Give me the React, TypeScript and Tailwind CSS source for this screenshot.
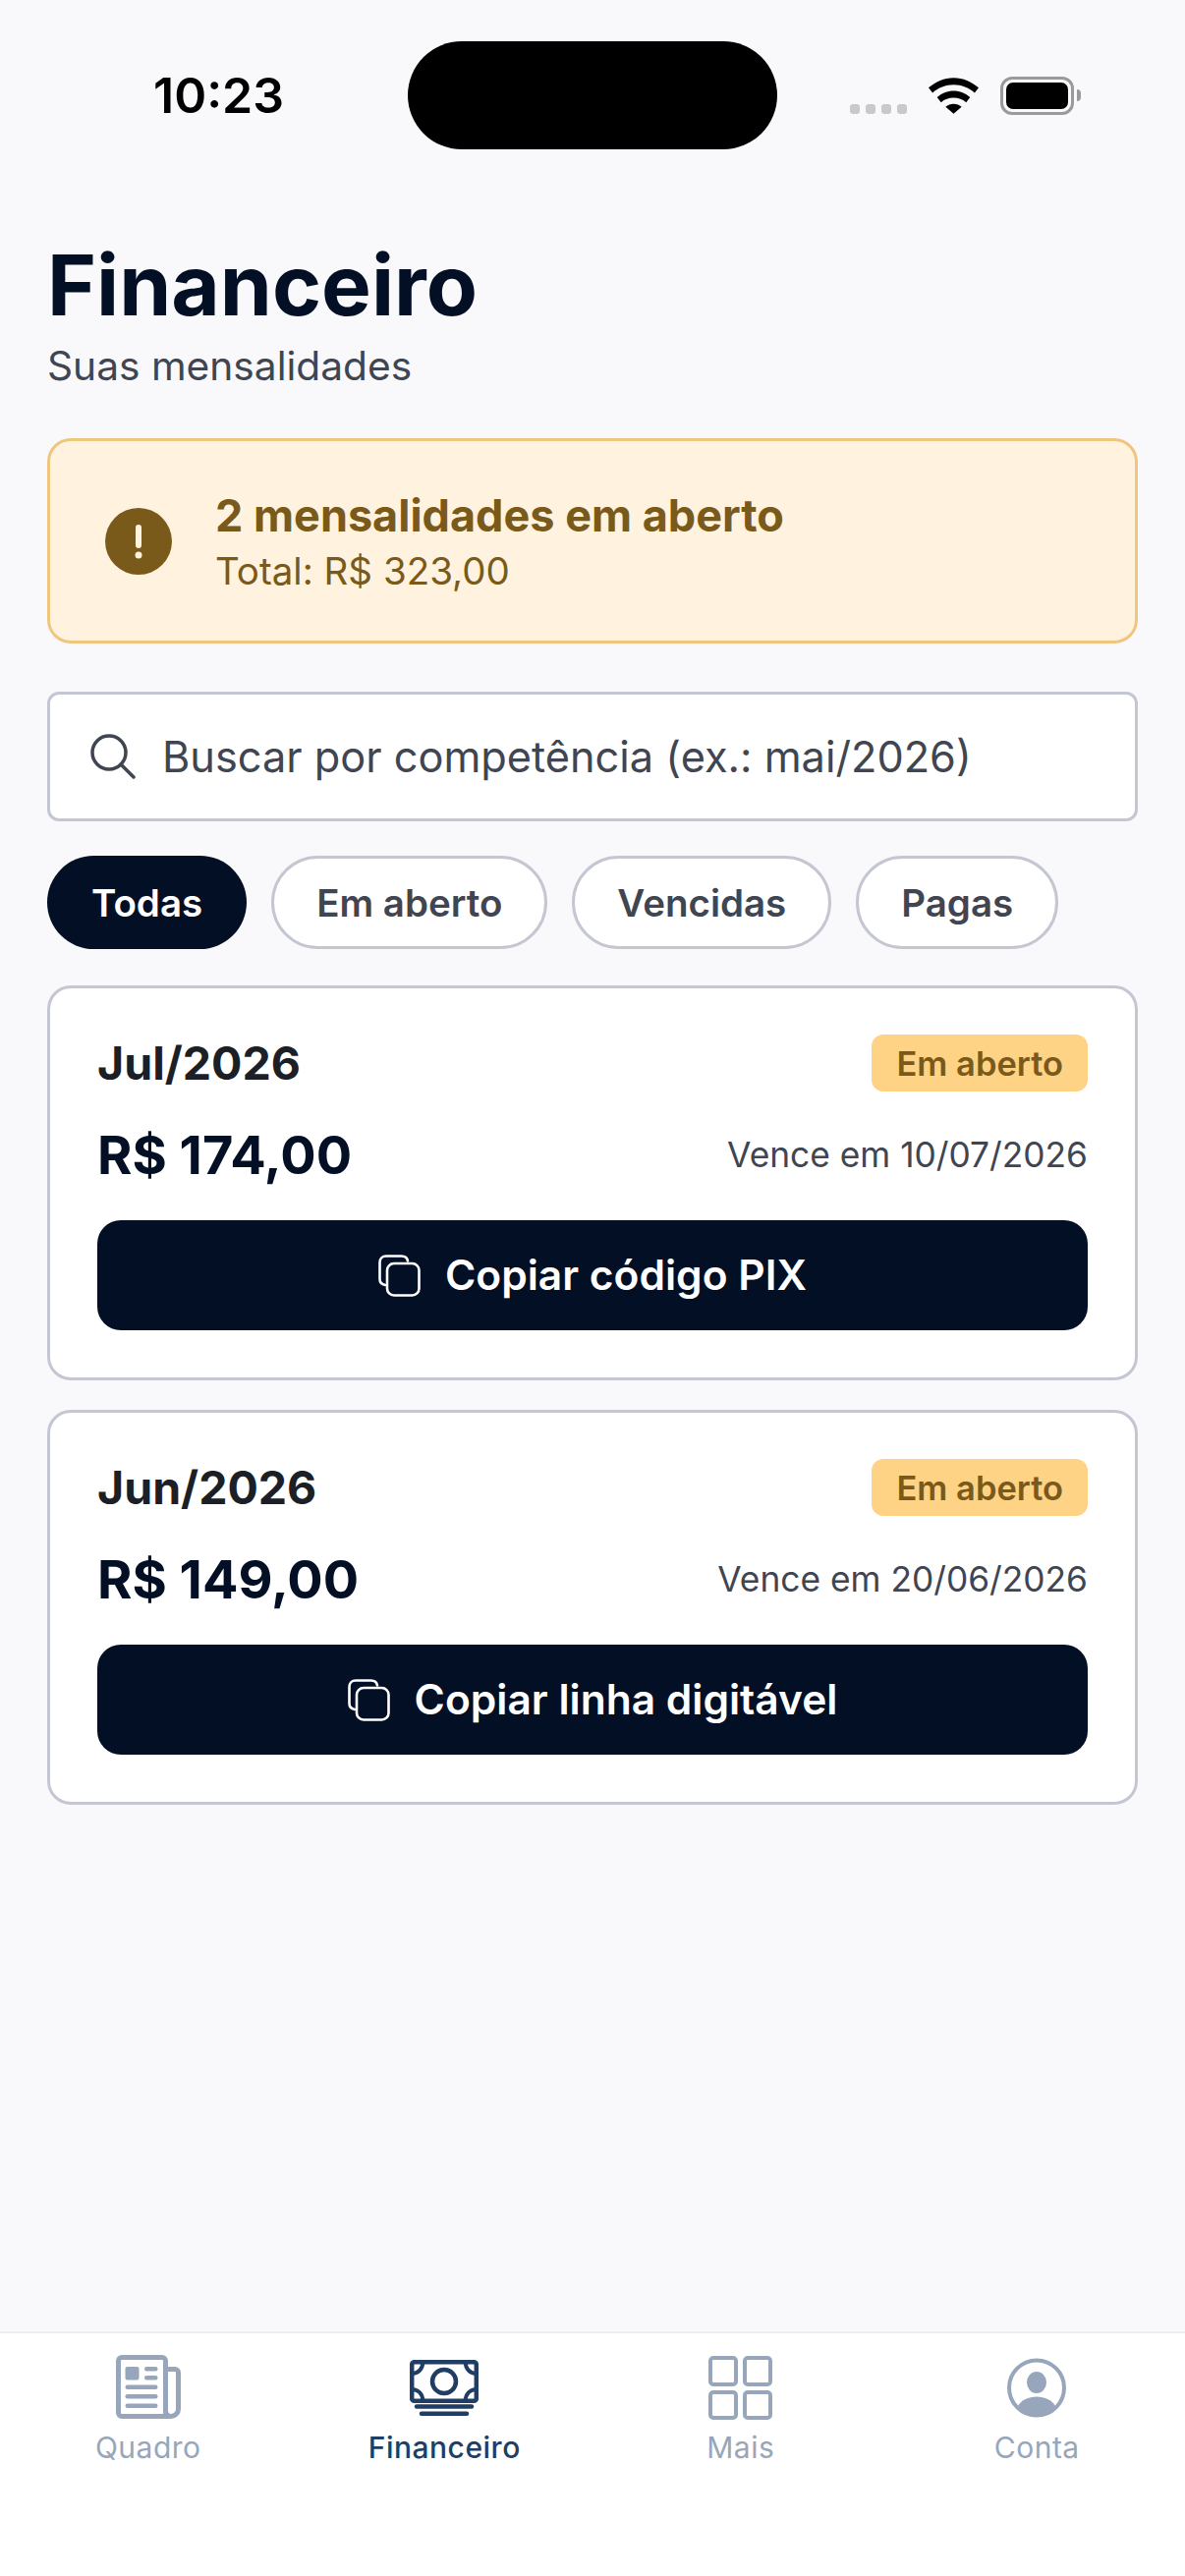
import React from 'react';

const NAVY = 'text-[#020f25]';

const CopyIcon = () => (
    <svg width="43" height="43" viewBox="0 0 43 43" fill="none" stroke="white" strokeWidth="2.6">
        <path d="M7 31c-3 -.6 -5.500 -2.800 -5.500 -6V8c0 -3.500 2.500 -6.500 6.500 -6.500h15.500c3.500 0 6 1.800 6.500 5" strokeLinecap="round" />
        <rect x="9" y="9" width="32.500" height="32.500" rx="7" />
    </svg>
);

const NewspaperIcon = () => (
    <svg width="66" height="72" viewBox="0 0 66 66" className="text-[#98a6bb]">
        <path d="M2.500 6a3.500 3.500 0 0 1 3.500-3.500h41a3.500 3.500 0 0 1 3.500 3.500v56.500H6a3.500 3.500 0 0 1-3.500-3.500z" fill="none" stroke="currentColor" strokeWidth="5" />
        <path d="M51 14.500h9a3.500 3.500 0 0 1 3.500 3.500v37a7.500 7.500 0 0 1-7.500 7.500H46" fill="none" stroke="currentColor" strokeWidth="5" />
        <path d="M50.500 55a7.500 7.500 0 0 0 5.500 7.500" fill="none" stroke="currentColor" strokeWidth="4" />
        <rect x="9.500" y="12" width="14" height="13.500" rx="2" fill="currentColor" />
        <rect x="29" y="12" width="13.500" height="4.500" rx="2.200" fill="currentColor" />
        <rect x="29" y="21" width="13.500" height="4.500" rx="2.200" fill="currentColor" />
        <rect x="9.500" y="30.500" width="33" height="4.500" rx="2.200" fill="currentColor" />
        <rect x="9.500" y="40" width="33" height="4.500" rx="2.200" fill="currentColor" />
        <rect x="9.500" y="49.500" width="33" height="4.500" rx="2.200" fill="currentColor" />
    </svg>
);

const MoneyIcon = () => (
    <svg width="70" height="57" viewBox="0 0 70 57" className="text-[#203d64]" fill="none" stroke="currentColor">
        <rect x="2.200" y="2.200" width="65.600" height="39.600" rx="2.500" strokeWidth="4.500" />
        <circle cx="35" cy="22" r="12" strokeWidth="4.500" />
        <path d="M2 14c6.500 0 11-4.500 11.500-12M68 14c-6.500 0-11-4.500-11.500-12M2 30c6.500 0 11 4.500 11.500 12M68 30c-6.500 0-11 4.500-11.500 12" strokeWidth="4" />
        <path d="M7 47.500h56" strokeWidth="4.500" strokeLinecap="round" />
        <path d="M12 54.700h46" strokeWidth="4.500" strokeLinecap="round" />
    </svg>
);

const GridIcon = () => (
    <svg width="65" height="65" viewBox="0 0 65 65" className="text-[#98a6bb]" fill="none" stroke="currentColor" strokeWidth="4">
        <rect x="2" y="2" width="26" height="27" rx="3" />
        <rect x="37" y="2" width="26" height="27" rx="3" />
        <rect x="2" y="37" width="26" height="26" rx="3" />
        <rect x="37" y="37" width="26" height="26" rx="3" />
    </svg>
);

const AccountIcon = () => (
    <svg width="60" height="61" viewBox="0 0 60 61" className="text-[#98a6bb]">
        <circle cx="30" cy="30.500" r="28" fill="none" stroke="currentColor" strokeWidth="4" />
        <ellipse cx="30" cy="25" rx="10" ry="11" fill="currentColor" />
        <path d="M11 49c3.500-6 10.500-9.500 19-9.500s15.500 3.500 19 9.500c-4.500 6-11 9.500-19 9.500s-14.500-3.500-19-9.500z" fill="currentColor" />
    </svg>
);

const StatusBar = () => (
    <div className="mt-[42px] flex h-[110px] items-center">
        <div className="w-[415px] pl-[156px] text-[50px] font-semibold leading-none text-black">10:23</div>
        <div className="h-[110px] w-[376px] rounded-[55px] bg-black" />
        <div className="ml-[74px] flex items-center gap-[22px]">
            <div className="mt-[28px] flex gap-[6px]">
                <span className="h-[10px] w-[10px] rounded-[3px] bg-[#c9c9cb]" />
                <span className="h-[10px] w-[10px] rounded-[3px] bg-[#c9c9cb]" />
                <span className="h-[10px] w-[10px] rounded-[3px] bg-[#c9c9cb]" />
                <span className="h-[10px] w-[10px] rounded-[3px] bg-[#c9c9cb]" />
            </div>
            <svg width="51" height="37" viewBox="0 0 50 36" fill="black">
                <path d="M25 0c9.500 0 18 3.800 25 10l-4 5c-5.800-5-13-8-21-8S9.800 10 4 15l-4-5C7 3.800 15.500 0 25 0z" />
                <path d="M25 13c6.300 0 12 2.400 16.500 6.500l-4 5C34 21.500 29.800 20 25 20s-9 1.500-12.500 4.500l-4-5C13 15.400 18.700 13 25 13z" />
                <path d="M25 26c3 0 5.700 1 8 3l-8 7-8-7c2.300-2 5-3 8-3z" />
            </svg>
            <div className="flex items-center gap-[3px]">
                <div className="flex h-[39px] w-[75px] items-center justify-center rounded-[12px] border-[3px] border-[#9a9a9c] p-[3px]">
                    <div className="h-full w-full rounded-[7px] bg-black" />
                </div>
                <div className="h-[12px] w-[4px] rounded-r-full bg-[#9a9a9c]" />
            </div>
        </div>
    </div>
);

const Chip = ({ label, active }: { label: string; active?: boolean }) => (
    <div
        className={
            active
                ? 'flex h-[95px] items-center rounded-[48px] bg-[#020f25] px-[45px] pt-[2px] text-[38.500px] font-semibold text-white'
                : 'flex h-[95px] items-center rounded-[48px] border-[3px] border-[#c4c7d1] bg-white px-[43px] pt-[2px] text-[38.500px] font-semibold text-[#3f4551]'
        }
    >
        {label}
    </div>
);

const BillCard = ({ month, value, due, action }: { month: string; value: string; due: string; action: string }) => (
    <div className="flex h-[402px] flex-col rounded-[24px] border-[3px] border-[#c4c7d1] bg-white px-[48px] pt-[47px]">
        <div className="flex h-[58px] items-center justify-between">
            <div className="pt-[2px] text-[46.500px] font-bold text-[#1c1f26]">{month}</div>
            <div className="flex h-[58px] items-center rounded-[12px] bg-[#fed385] px-[25px] pt-[2px] text-[34.500px] font-semibold text-[#7a5a1a]">Em aberto</div>
        </div>
        <div className="mt-[34px] flex h-[60px] items-center justify-between">
            <div className={`text-[54px] font-bold ${NAVY}`}>{value}</div>
            <div className="pt-[2px] text-[35.300px] text-[#3f4551]">{due}</div>
        </div>
        <div className="mt-[37px] flex h-[112px] items-center justify-center gap-[25px] rounded-[24px] bg-[#020f25] text-[42.500px] font-semibold text-white">
            <CopyIcon />
            {action}
        </div>
    </div>
);

const TabItem = ({ icon, label, active }: { icon: React.ReactNode; label: string; active?: boolean }) => (
    <div className="flex flex-col items-center">
        <div className="flex h-[72px] items-center">{icon}</div>
        <div
            className={
                active
                    ? 'mt-[7px] text-[30px] font-medium leading-[36px] tracking-[0.5px] text-[#203d64]'
                    : 'mt-[7px] text-[30px] leading-[36px] tracking-[0.5px] text-[#98a6bb]'
            }
        >
            {label}
        </div>
    </div>
);

export default function App() {
    return (
        <div className="flex h-[2622px] w-[1206px] flex-col bg-[#f9f9fc] font-['Inter',sans-serif]">
            <StatusBar />

            <div className="flex-1 px-[48px] pt-[99px]">
                {/* cabeçalho */}
                <h1 className={`text-[85.300px] font-bold leading-[78px] ${NAVY}`}>Financeiro</h1>
                <div className="mt-[20px] text-[40.700px] leading-[48px] text-[#3f4551]">Suas mensalidades</div>

                {/* aviso */}
                <div className="mt-[49px] flex h-[209px] items-center gap-[44px] rounded-[24px] border-[3px] border-[#f0c67f] bg-[#fff3df] pl-[57px]">
                    <svg width="68" height="68" viewBox="0 0 68 68" className="-ml-[1px]">
                        <circle cx="34" cy="34" r="34" fill="#7a5a1a" />
                        <rect x="31" y="17" width="6" height="24" rx="3" fill="#fff3df" />
                        <circle cx="34" cy="48" r="3.500" fill="#fff3df" />
                    </svg>
                    <div>
                        <div className="pt-[2px] text-[45px] font-bold leading-[58px] text-[#7a5a1a]">2 mensalidades em aberto</div>
                        <div className="mt-[1px] text-[38.500px] leading-[52px] text-[#7a5a1a]">Total: R$ 323,00</div>
                    </div>
                </div>

                {/* busca */}
                <div className="mt-[49px] flex h-[132px] items-center gap-[27px] rounded-[12px] border-[3px] border-[#c4c7d1] bg-white pl-[41px]">
                    <svg width="46" height="46" viewBox="0 0 46 46" fill="none" stroke="#3f4551" strokeWidth="3.500" strokeLinecap="round">
                        <circle cx="19" cy="19" r="17" />
                        <path d="M31 31l13 13" />
                    </svg>
                    <div className="pt-[1px] text-[43.300px] text-[#3f4551]">Buscar por competência (ex.: mai/2026)</div>
                </div>

                {/* filtros */}
                <div className="mt-[35px] flex gap-[25px]">
                    <Chip label="Todas" active />
                    <Chip label="Em aberto" />
                    <Chip label="Vencidas" />
                    <Chip label="Pagas" />
                </div>

                {/* lista */}
                <div className="mt-[37px] flex flex-col gap-[30px]">
                    <BillCard month="Jul/2026" value="R$ 174,00" due="Vence em 10/07/2026" action="Copiar código PIX" />
                    <BillCard month="Jun/2026" value="R$ 149,00" due="Vence em 20/06/2026" action="Copiar linha digitável" />
                </div>
            </div>

            {/* barra inferior */}
            <div className="grid h-[249px] grid-cols-4 border-t-[2px] border-[#eceef2] bg-white pt-[19px]">
                <TabItem icon={<NewspaperIcon />} label="Quadro" />
                <TabItem icon={<MoneyIcon />} label="Financeiro" active />
                <TabItem icon={<GridIcon />} label="Mais" />
                <TabItem icon={<AccountIcon />} label="Conta" />
            </div>
        </div>
    );
}
